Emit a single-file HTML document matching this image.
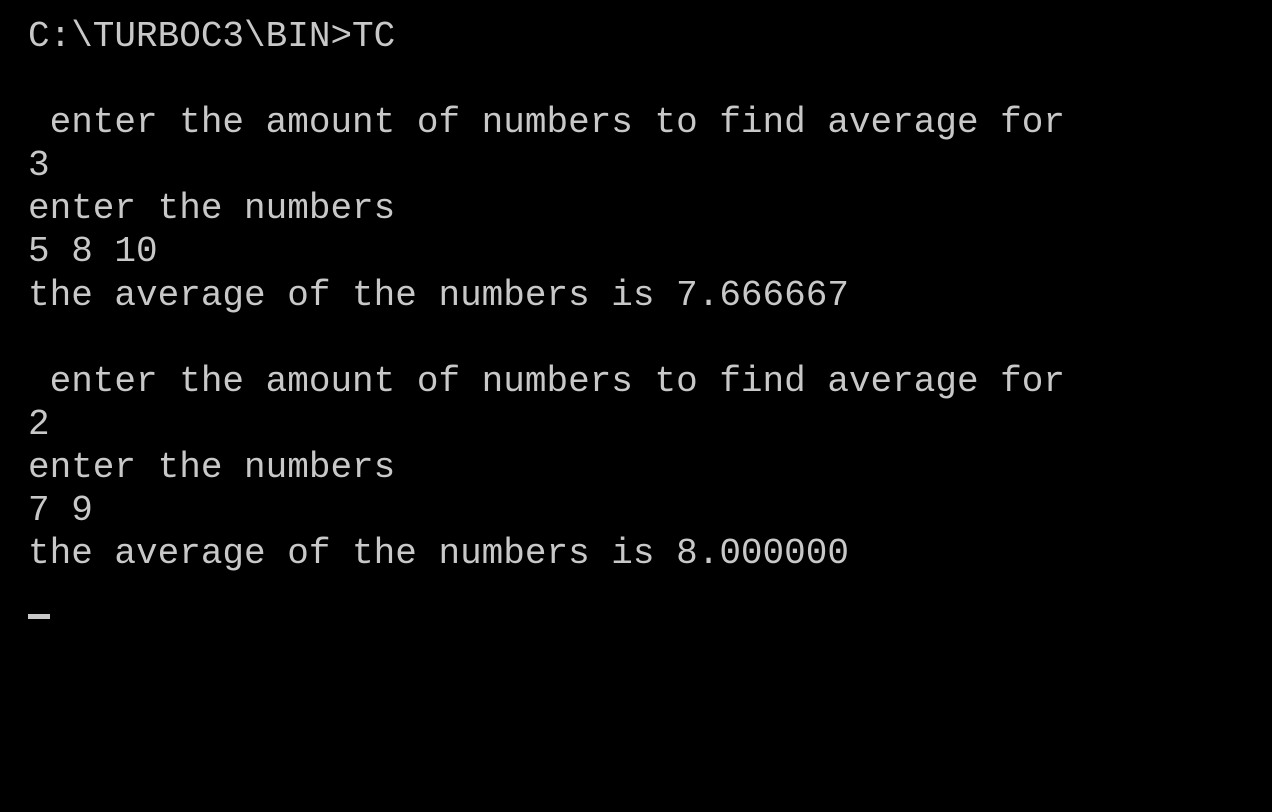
<!DOCTYPE html>
<html><head><meta charset="utf-8"><style>
html,body{margin:0;padding:0;background:#000;width:1272px;height:812px;overflow:hidden}
pre{margin:0;position:absolute;left:28px;top:15px;font-family:"Liberation Mono",monospace;font-size:36px;line-height:43.1px;color:#c8c8c8;white-space:pre}
.cur{display:inline-block;width:22px;height:5px;background:#c8c8c8;vertical-align:-13px}
</style></head><body>
<pre>C:\TURBOC3\BIN&gt;TC

 enter the amount of numbers to find average for
3
enter the numbers
5 8 10
the average of the numbers is 7.666667

 enter the amount of numbers to find average for
2
enter the numbers
7 9
the average of the numbers is 8.000000
<span class="cur"></span></pre>
</body></html>
